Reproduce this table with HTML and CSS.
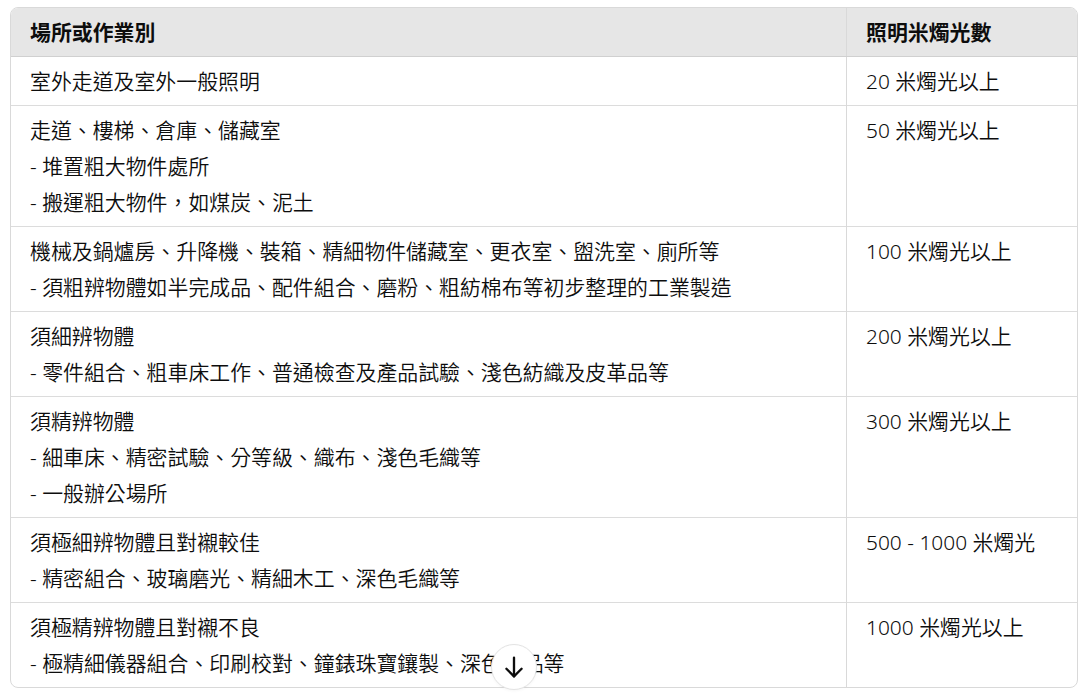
FILE: index.html
```html
<!DOCTYPE html>
<html lang="zh-Hant">
<head>
<meta charset="utf-8">
<link rel="stylesheet" href="styles.css">
</head>
<body>
<div class="table-wrap">
  <table class="lux">
    <thead>
      <tr><th class="c1">場所或作業別</th><th class="c2">照明米燭光數</th></tr>
    </thead>
    <tbody>
      <tr><td>室外走道及室外一般照明</td><td>20 米燭光以上</td></tr>
      <tr><td>走道、樓梯、倉庫、儲藏室<br>- 堆置粗大物件處所<br>- 搬運粗大物件，如煤炭、泥土</td><td>50 米燭光以上</td></tr>
      <tr><td>機械及鍋爐房、升降機、裝箱、精細物件儲藏室、更衣室、盥洗室、廁所等<br>- 須粗辨物體如半完成品、配件組合、磨粉、粗紡棉布等初步整理的工業製造</td><td>100 米燭光以上</td></tr>
      <tr><td>須細辨物體<br>- 零件組合、粗車床工作、普通檢查及產品試驗、淺色紡織及皮革品等</td><td>200 米燭光以上</td></tr>
      <tr><td>須精辨物體<br>- 細車床、精密試驗、分等級、織布、淺色毛織等<br>- 一般辦公場所</td><td>300 米燭光以上</td></tr>
      <tr><td>須極細辨物體且對襯較佳<br>- 精密組合、玻璃磨光、精細木工、深色毛織等</td><td>500 - 1000 米燭光</td></tr>
      <tr><td>須極精辨物體且對襯不良<br>- 極精細儀器組合、印刷校對、鐘錶珠寶鑲製、深色織品等</td><td>1000 米燭光以上</td></tr>
    </tbody>
  </table>
</div>
<button class="scroll-btn" aria-label="scroll down">
  <svg width="28" height="28" viewBox="0 0 24 24" fill="none" stroke="#0d0d0d" stroke-width="2" stroke-linecap="round" stroke-linejoin="round"><path d="M12 4v16"/><path d="M5.5 13.5L12 20l6.5-6.5"/></svg>
</button>
</body>
</html>
```
FILE: styles.css
```css
html, body {
  margin: 0;
  padding: 0;
  background: #ffffff;
}
body {
  padding: 7px 0 0 10px;
  font-family: "Noto Sans", "Noto Sans CJK TC", sans-serif;
  color: #0d0d0d;
  font-size: 20.9px;
}
.table-wrap {
  width: 1066px;
  border: 1px solid #d9d9d9;
  border-radius: 8px;
  overflow: hidden;
}
.lux {
  width: 100%;
  border-collapse: collapse;
  table-layout: fixed;
}
.lux th, .lux td {
  text-align: left;
  vertical-align: top;
  padding: 6px 19px;
  line-height: 36px;
  font-weight: 350;
}
.lux th {
  background: #e6e6e6;
  font-weight: 600;
  border-bottom: 1px solid #d0d0d0;
}
.lux td {
  border-top: 1px solid #dcdcdc;
}
.lux tbody tr:first-child td {
  border-top: none;
}
.lux .c1 { width: 797px; }
.lux th + th, .lux td + td {
  border-left: 1px solid #d9d9d9;
}
.scroll-btn {
  position: absolute;
  left: 491px;
  top: 644px;
  width: 46px;
  height: 46px;
  border-radius: 50%;
  border: 1px solid #e3e3e3;
  background: #ffffff;
  display: flex;
  align-items: center;
  justify-content: center;
  padding: 0;
  box-shadow: 0 1px 3px rgba(0,0,0,0.04);
}
```
